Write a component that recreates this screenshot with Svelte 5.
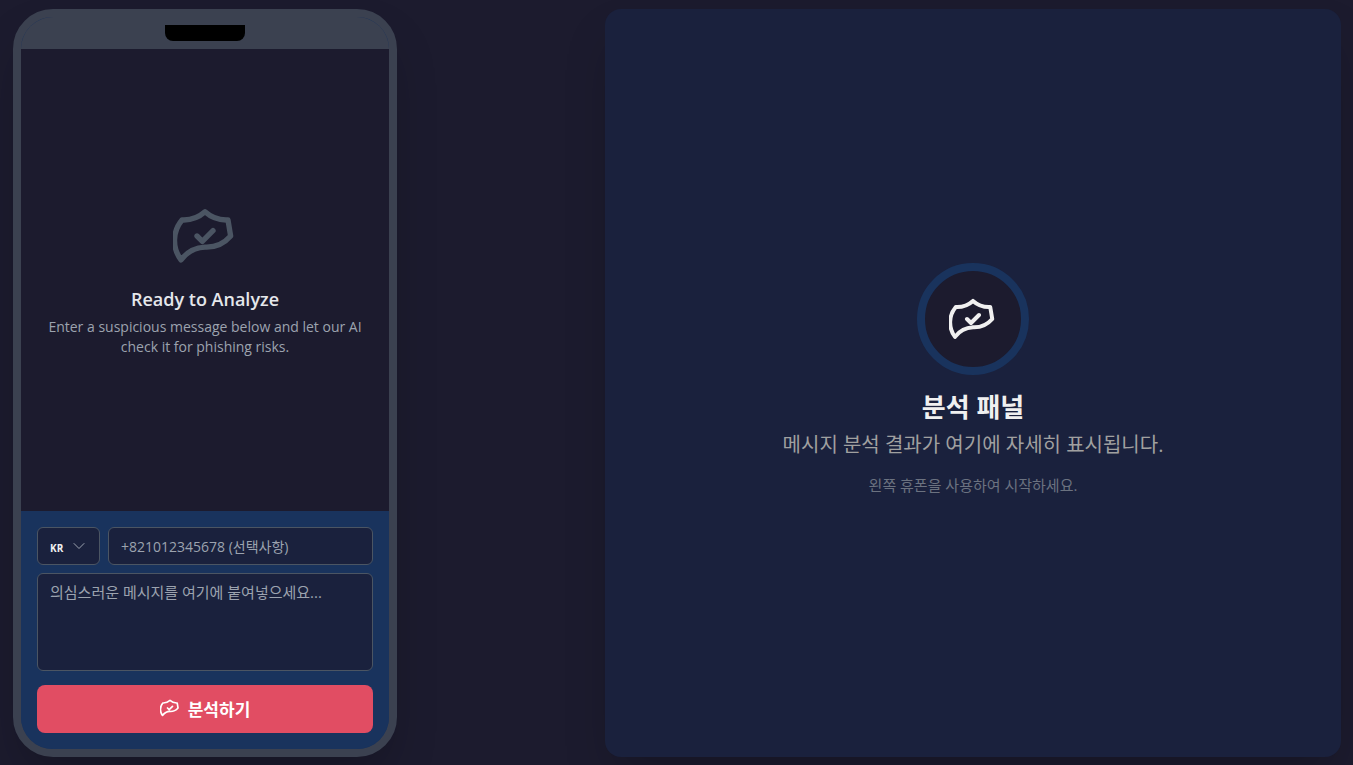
<script>
  const countries = ["KR", "US", "JP", "CN"];

  let country = $state("KR");
  let phone = $state("");
  let message = $state("");

  function analyze(e) {
    e.preventDefault();
  }
</script>

{#snippet shield(cls)}
  <svg class={cls} viewBox="0 0 24 24" fill="none" stroke="currentColor" stroke-width="2" stroke-linecap="round" stroke-linejoin="round" aria-hidden="true">
    <path d="M9 12l2 2 4-4m5.618-4.016A11.955 11.955 0 0112 2.944a11.955 11.955 0 01-8.618 3.04A12.02 12.02 0 003 20.944a11.955 11.955 0 019-4.8 12.02 12.02 0 009.618-4.16z" />
  </svg>
{/snippet}

<main class="layout">
  <section class="phone">
    <div class="status-bar"><div class="notch"></div></div>

    <div class="screen">
      {@render shield("icon-ready")}
      <h2>Ready to Analyze</h2>
      <p>Enter a suspicious message below and let our AI check it for phishing risks.</p>
    </div>

    <form class="composer" onsubmit={analyze}>
      <div class="phone-row">
        <div class="country">
          <select bind:value={country} aria-label="Country">
            {#each countries as c}
              <option value={c}>{c}</option>
            {/each}
          </select>
          <svg class="chevron" viewBox="0 0 12 12" fill="none" stroke="currentColor" stroke-linecap="round" stroke-linejoin="round" aria-hidden="true">
            <path d="M1 3.5l5 5 5-5" />
          </svg>
        </div>
        <input type="tel" bind:value={phone} placeholder="+821012345678 (선택사항)" aria-label="Phone number" />
      </div>
      <textarea bind:value={message} placeholder="의심스러운 메시지를 여기에 붙여넣으세요..." aria-label="Message"></textarea>
      <button type="submit">
        {@render shield("icon-btn")}
        분석하기
      </button>
    </form>
  </section>

  <section class="panel">
    <div class="badge">{@render shield("icon-panel")}</div>
    <h1>분석 패널</h1>
    <p class="lead">메시지 분석 결과가 여기에 자세히 표시됩니다.</p>
    <p class="hint">왼쪽 휴폰을 사용하여 시작하세요.</p>
  </section>
</main>

<style>
  :global(body) { margin: 0; background: #1c1b2e; }

  .layout {
    --bg: #1c1b2e;
    --card: #1a213d;
    --blue: #19335d;
    --frame: #3b4150;
    --line: #4b5563;
    --accent: #e14d63;
    --text: #f0f0f0;
    box-sizing: border-box;
    min-height: 100vh;
    padding: 9px 12px 8px 13px;
    display: grid;
    grid-template-columns: 35fr 46fr;
    gap: 32px;
    font-family: "Open Sans", "Noto Sans CJK KR", sans-serif;
    color: var(--text);
  }
  h1, h2, p { margin: 0; }
  svg { display: block; flex: none; }

  /* Phone */
  .phone {
    box-sizing: border-box;
    width: 100%;
    max-width: 384px;
    display: flex;
    flex-direction: column;
    overflow: hidden;
    background: var(--blue);
    border: 8px solid var(--frame);
    border-radius: 40px;
    box-shadow: 0 25px 50px -12px rgba(0, 0, 0, 0.25);
  }
  .status-bar { height: 32px; background: var(--frame); display: flex; align-items: center; justify-content: center; }
  .notch { width: 80px; height: 16px; background: #000; border-radius: 0 0 8px 8px; }

  .screen { flex: 1; display: flex; flex-direction: column; align-items: center; justify-content: center; padding: 17px 24px 16px; text-align: center; background: var(--bg); }
  .icon-ready { width: 64px; height: 64px; color: var(--line); margin-bottom: 17px; }
  .screen h2 { font-size: 18px; line-height: 28px; font-weight: 600; color: #e5e7eb; margin-bottom: 4px; }
  .screen p { font-size: 14px; line-height: 20px; color: #9ca3af; }

  .composer { background: var(--blue); padding: 16px; display: flex; flex-direction: column; }
  .phone-row { display: flex; gap: 8px; margin-bottom: 8px; }
  .country { position: relative; flex: none; }
  select, input, textarea {
    box-sizing: border-box;
    margin: 0;
    background: var(--card);
    border: 1px solid var(--line);
    border-radius: 6px;
    color: var(--text);
    font-family: inherit;
    font-size: 14px;
    line-height: 20px;
    padding: 8px 12px;
  }
  select { appearance: none; width: 63px; height: 38px; padding: 10px 12px 6px; font-size: 10px; font-weight: 700; }
  .chevron { position: absolute; right: 15px; top: 13px; width: 12px; height: 12px; color: #9ca3af; pointer-events: none; }
  input { flex: 1; min-width: 0; height: 38px; }
  textarea { width: 100%; height: 98px; font-size: 15px; resize: none; margin-bottom: 14px; }
  input::placeholder, textarea::placeholder { color: #9ca3af; opacity: 1; }
  button {
    display: flex;
    align-items: center;
    justify-content: center;
    gap: 8px;
    height: 48px;
    padding: 0 16px 2px;
    border: none;
    border-radius: 8px;
    background: var(--accent);
    color: #fff;
    font-family: inherit;
    font-size: 17px;
    font-weight: 700;
    cursor: pointer;
  }
  .icon-btn { width: 20px; height: 20px; }

  /* Analysis panel */
  .panel {
    box-sizing: border-box;
    display: flex;
    flex-direction: column;
    align-items: center;
    justify-content: center;
    padding: 24px 32px 32px;
    background: var(--card);
    border-radius: 16px;
    text-align: center;
    box-shadow: 0 25px 50px -12px rgba(0, 0, 0, 0.25);
  }
  .badge { padding: 24px; background: var(--bg); border: 8px solid var(--blue); border-radius: 50%; margin-bottom: 16px; }
  .icon-panel { width: 48px; height: 48px; }
  h1 { font-size: 26px; line-height: 32px; font-weight: 700; margin-bottom: 8px; }
  .lead { font-size: 20px; line-height: 28px; color: #a0a0a0; margin-bottom: 16px; }
  .hint { font-size: 15px; line-height: 20px; color: #6b7280; }
</style>
